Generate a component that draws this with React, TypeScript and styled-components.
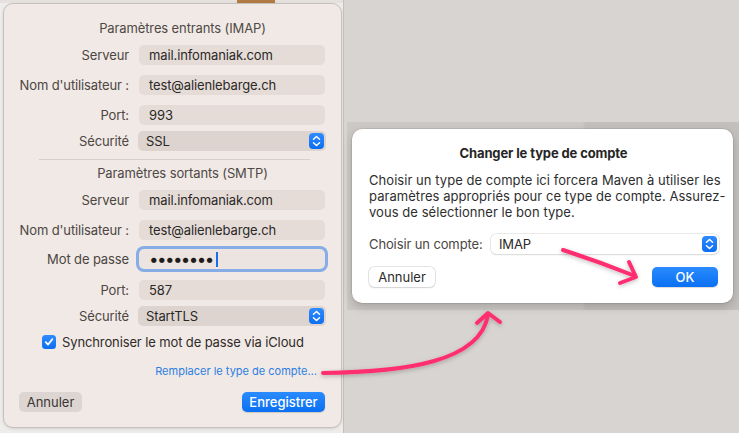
import styled, { createGlobalStyle } from 'styled-components';

const GlobalStyle = createGlobalStyle`
  html, body {
    margin: 0;
    padding: 0;
    background: #d8d4d1;
  }
  body {
    font-family: Inter, "Liberation Sans", Arial, sans-serif;
    font-size: 13px;
    letter-spacing: -0.12px;
    -webkit-font-smoothing: antialiased;
  }
`;

const Page = styled.div`
  position: relative;
  width: 739px;
  height: 433px;
  overflow: hidden;
  display: flex;
`;

/* window behind the account sheet */
const BackWindow = styled.div`
  width: 343px;
  height: 100%;
  background: #efedec;
  border-right: 1px solid #c4c0bd;
  display: flex;
  flex-direction: column;
`;

const TopStrip = styled.div`
  height: 3px;
  display: flex;
  background: #e4e1df;
`;

const Chip = styled.div`
  margin-left: 237px;
  width: 38px;
  background: #b07c44;
`;

const Sheet = styled.div`
  box-sizing: border-box;
  width: 339px;
  height: 425px;
  margin-left: 3px;
  padding-right: 16px;
  background: #f1e9e5;
  border: 1px solid #c7c1bd;
  border-radius: 10px;
  box-shadow: 0 1px 3px rgba(0, 0, 0, 0.12);
  display: flex;
  flex-direction: column;
`;

const SectionTitle = styled.div<{ $mt: number }>`
  margin-top: ${(p) => p.$mt}px;
  padding-left: 36px;
  height: 16px;
  line-height: 16px;
  text-align: center;
  color: #4e4946;
`;

const Divider = styled.div`
  margin: 8px 0 0 35px;
  width: 271px;
  height: 1px;
  background: #d6cfcb;
`;

const FormRow = styled.div<{ $mt: number }>`
  margin-top: ${(p) => p.$mt}px;
  display: grid;
  grid-template-columns: 125px 186px;
  column-gap: 10px;
  align-items: center;
  height: 20px;
`;

const Label = styled.div`
  text-align: right;
  color: #4b4643;
  white-space: nowrap;
`;

const Field = styled.div`
  box-sizing: border-box;
  height: 20px;
  line-height: 20px;
  padding-left: 10px;
  background: #e5dcd8;
  border-radius: 5px;
  color: #2b2826;
  white-space: nowrap;
`;

const FocusField = styled(Field)`
  display: flex;
  align-items: center;
  box-shadow: 0 0 0 3px #86ade6;
  background: #ece4e0;
`;

const Dots = styled.span`
  font-size: 17px;
  line-height: 20px;
  letter-spacing: -1.6px;
  color: #1e1c1b;
`;

const Caret = styled.span`
  width: 2px;
  height: 15px;
  margin-left: 3px;
  background: #1a6fe6;
`;

const Popup = styled.div<{ $light?: boolean }>`
  box-sizing: border-box;
  height: 20px;
  margin-left: -1px;
  margin-right: -1px;
  padding: 0 2px 0 8px;
  display: flex;
  align-items: center;
  justify-content: space-between;
  border-radius: 5px;
  color: #2b2826;
  background: ${(p) => (p.$light ? '#ffffff' : '#ddd4d0')};
  box-shadow: ${(p) =>
    p.$light ? '0 0 0 0.5px #d4d4d4, 0 1px 1.5px rgba(0,0,0,0.12)' : 'none'};
`;

const Stepper = styled.div`
  width: 15px;
  height: 16px;
  border-radius: 4px;
  background: linear-gradient(#2f8bff, #0c6ef1);
  display: flex;
  align-items: center;
  justify-content: center;
`;

const CheckRow = styled.div`
  margin: 8px 0 0 38px;
  height: 16px;
  display: flex;
  align-items: center;
  gap: 6px;
  color: #2f2b29;
  white-space: nowrap;
`;

const CheckBox = styled.div`
  width: 14px;
  height: 14px;
  border-radius: 3.5px;
  background: linear-gradient(#2f8bff, #0c6ef1);
  display: flex;
  align-items: center;
  justify-content: center;
`;

const LinkRow = styled.div`
  margin-top: 14px;
  padding-right: 8px;
  height: 14px;
  display: flex;
  justify-content: flex-end;
  align-items: center;
`;

const Link = styled.span`
  color: #2b7fe3;
  font-size: 11px;
  letter-spacing: 0;
`;

const ButtonRow = styled.div<{ $mt: number; $pl: number }>`
  margin-top: ${(p) => p.$mt}px;
  padding-left: ${(p) => p.$pl}px;
  display: flex;
  justify-content: space-between;
`;

const Button = styled.button<{ $kind: 'grey' | 'white' | 'blue'; $w: number }>`
  width: ${(p) => p.$w}px;
  height: 20px;
  padding: 0;
  border: none;
  border-radius: 5px;
  font: inherit;
  font-size: 13px;
  ${(p) =>
    p.$kind === 'blue' &&
    `
    color: #fff;
    font-weight: 500;
    background: linear-gradient(#2a8bff, #0a70f2);
    box-shadow: 0 0.5px 1px rgba(0,0,0,0.15);
  `}
  ${(p) =>
    p.$kind === 'grey' &&
    `
    color: #3a3633;
    background: #ddd5d1;
  `}
  ${(p) =>
    p.$kind === 'white' &&
    `
    color: #2b2b2b;
    background: #fff;
    box-shadow: 0 0 0 0.5px #c9c9c9, 0 1px 1.5px rgba(0,0,0,0.12);
  `}
`;

/* right side: dimmed parent area and the account-type dialog */
const RightSide = styled.div`
  flex: 1;
  padding-top: 122px;
`;

const DimBand = styled.div`
  margin-left: 3px;
  height: 188px;
  box-sizing: border-box;
  padding: 7px 0 0 5px;
  background: linear-gradient(90deg, #ccc8c5 0%, #ccc8c5 60%, #c3bfbc 61%, #c3bfbc 100%);
`;

const Dialog = styled.div`
  box-sizing: border-box;
  width: 381px;
  height: 174px;
  padding: 16px 15px 0 17px;
  background: #ffffff;
  border-radius: 10px;
  box-shadow: 0 0 0 0.5px rgba(0, 0, 0, 0.15), 0 4px 10px rgba(0, 0, 0, 0.18);
  display: flex;
  flex-direction: column;
  color: #2b2b2b;
`;

const DialogTitle = styled.div`
  height: 16px;
  line-height: 16px;
  text-align: center;
  font-weight: 700;
  color: #262626;
`;

const Paragraph = styled.p`
  margin: 11px 0 0;
  line-height: 16px;
  letter-spacing: 0.05px;
  color: #2e2e2e;
  white-space: nowrap;
`;

const DialogRow = styled.div`
  margin-top: 14px;
  display: grid;
  grid-template-columns: 113px 1fr;
  column-gap: 10px;
  align-items: center;
  height: 20px;
`;

const Overlay = styled.svg`
  position: absolute;
  left: 0;
  top: 0;
  pointer-events: none;
  overflow: visible;
`;

const StepperIcon = () => (
  <Stepper>
    <svg width="9" height="12" viewBox="0 0 9 12">
      <path d="M1.5 4.2 L4.5 1.5 L7.5 4.2 M1.5 7.8 L4.5 10.5 L7.5 7.8" fill="none" stroke="#fff" strokeWidth="1.5" strokeLinecap="round" strokeLinejoin="round" />
    </svg>
  </Stepper>
);

const Check = () => (
  <CheckBox>
    <svg width="10" height="10" viewBox="0 0 10 10">
      <path d="M1.8 5.2 L4 7.6 L8.3 2.3" fill="none" stroke="#fff" strokeWidth="1.8" strokeLinecap="round" strokeLinejoin="round" />
    </svg>
  </CheckBox>
);

const TextRow = ({ label, value, mt }: { label: string; value: string; mt: number }) => (
  <FormRow $mt={mt}>
    <Label>{label}</Label>
    <Field>{value}</Field>
  </FormRow>
);

const SelectRow = ({ label, value, mt }: { label: string; value: string; mt: number }) => (
  <FormRow $mt={mt}>
    <Label>{label}</Label>
    <Popup>
      {value}
      <StepperIcon />
    </Popup>
  </FormRow>
);

export default function App() {
  return (
    <>
      <GlobalStyle />
      <Page>
        <BackWindow>
          <TopStrip>
            <Chip />
          </TopStrip>
          <Sheet>
            <SectionTitle $mt={16}>Paramètres entrants (IMAP)</SectionTitle>
            <TextRow mt={9} label="Serveur" value="mail.infomaniak.com" />
            <TextRow mt={10} label="Nom d'utilisateur :" value="test@alienlebarge.ch" />
            <TextRow mt={10} label="Port:" value="993" />
            <SelectRow mt={6} label="Sécurité" value="SSL" />
            <Divider />
            <SectionTitle $mt={5}>Paramètres sortants (SMTP)</SectionTitle>
            <TextRow mt={9} label="Serveur" value="mail.infomaniak.com" />
            <TextRow mt={10} label="Nom d'utilisateur :" value="test@alienlebarge.ch" />
            <FormRow $mt={9}>
              <Label>Mot de passe</Label>
              <FocusField>
                <Dots>••••••••</Dots>
                <Caret />
              </FocusField>
            </FormRow>
            <TextRow mt={11} label="Port:" value="587" />
            <SelectRow mt={6} label="Sécurité" value="StartTLS" />
            <CheckRow>
              <Check />
              Synchroniser le mot de passe via iCloud
            </CheckRow>
            <LinkRow>
              <Link>Remplacer le type de compte…</Link>
            </LinkRow>
            <ButtonRow $mt={14} $pl={15}>
              <Button $kind="grey" $w={63}>Annuler</Button>
              <Button $kind="blue" $w={83}>Enregistrer</Button>
            </ButtonRow>
          </Sheet>
        </BackWindow>

        <RightSide>
          <DimBand>
            <Dialog>
              <DialogTitle>Changer le type de compte</DialogTitle>
              <Paragraph>
                Choisir un type de compte ici forcera Maven à utiliser les
                <br />
                paramètres appropriés pour ce type de compte. Assurez-
                <br />
                vous de sélectionner le bon type.
              </Paragraph>
              <DialogRow>
                <Label>Choisir un compte:</Label>
                <Popup $light>
                  IMAP
                  <StepperIcon />
                </Popup>
              </DialogRow>
              <ButtonRow $mt={13} $pl={0}>
                <Button $kind="white" $w={66}>Annuler</Button>
                <Button $kind="blue" $w={66}>OK</Button>
              </ButtonRow>
            </Dialog>
          </DimBand>
        </RightSide>

        <Overlay width="739" height="433" viewBox="0 0 739 433">
          <defs>
            <filter id="arrowShadow" x="-20%" y="-20%" width="140%" height="140%">
              <feDropShadow dx="0" dy="1.5" stdDeviation="2" floodColor="#000" floodOpacity="0.25" />
            </filter>
          </defs>
          <g fill="none" stroke="#ff2f70" strokeWidth="4" strokeLinecap="round" strokeLinejoin="round" filter="url(#arrowShadow)">
            <path d="M323 373 C 405 372, 480 362, 488 315" />
            <path d="M477 323 L488 313 L500 322" />
            <path d="M563 250 Q 600 262, 635 276" />
            <path d="M629 262 L636 277 L620 283" />
          </g>
        </Overlay>
      </Page>
    </>
  );
}
